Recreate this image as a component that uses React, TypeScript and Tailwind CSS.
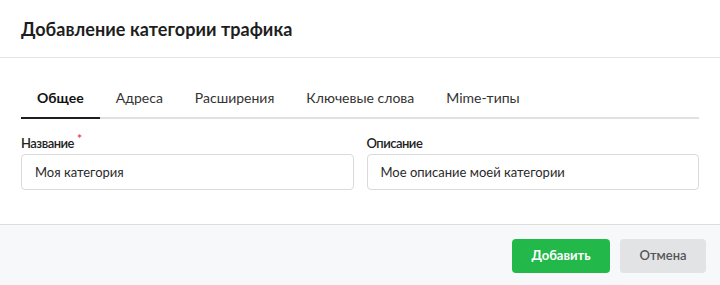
import { useState } from "react";

const tabs = ["Общее", "Адреса", "Расширения", "Ключевые слова", "Mime-типы"];

interface FieldProps {
  label: string;
  value: string;
  required?: boolean;
}

const Field = ({ label, value, required }: FieldProps) => {
  return (
    <div className="flex flex-col">
      <label className="flex h-[16px] items-center text-[13px] font-semibold leading-[16px] tracking-[-0.5px] text-[#222]">
        {label}
        {required && (
          <span className="relative -top-[4px] ml-[3px] text-[12px] font-bold text-[#e5416a]">*</span>
        )}
      </label>
      <input
        defaultValue={value}
        className="mt-[3px] h-[36px] rounded-[4px] border border-[#dadada] bg-white px-[13px] text-[13px] text-[#2a2a2a] outline-none"
      />
    </div>
  );
};

export default function App() {
  const [selected, setSelected] = useState(tabs[0]);

  return (
    <div className="h-[285px] w-[720px] overflow-hidden bg-white font-['Lato','Noto_Sans',sans-serif]">
      <div className="flex h-[58px] items-center border-b border-[#e3e3e3] px-[21px] pt-[2px]">
        <h1 className="text-[18px] font-bold tracking-[0.05px] text-[#1e1e1e]">
          Добавление категории трафика
        </h1>
      </div>

      <div className="px-[21px] pt-[20px] pb-[34px]">
        <div className="flex border-b-2 border-[#e0e0e0]">
          {tabs.map((tab) => (
            <button
              key={tab}
              onClick={() => setSelected(tab)}
              className={`${
                selected === tab
                  ? "border-[#1e1e1e] font-bold text-[#111]"
                  : "border-transparent text-[#333]"
              } -mb-[2px] border-b-2 px-[16px] pt-[10px] pb-[9px] text-[14px] leading-[20px]`}
            >
              {tab}
            </button>
          ))}
        </div>

        <div className="mt-[16px] grid grid-cols-2 gap-[13px]">
          <Field label="Название" value="Моя категория" required />
          <Field label="Описание" value="Мое описание моей категории" />
        </div>
      </div>

      <div className="flex h-[62px] justify-end gap-[10px] border-t border-[#dddddd] bg-[#f7f8fa] px-[14px] pt-[14px]">
        <button className="h-[34px] w-[98px] rounded-[4px] bg-[#22b94a] text-[13px] font-bold text-white">
          Добавить
        </button>
        <button className="h-[34px] w-[86px] rounded-[4px] bg-[#e2e3e5] text-[13px] font-semibold text-[#555]">
          Отмена
        </button>
      </div>
    </div>
  );
}
